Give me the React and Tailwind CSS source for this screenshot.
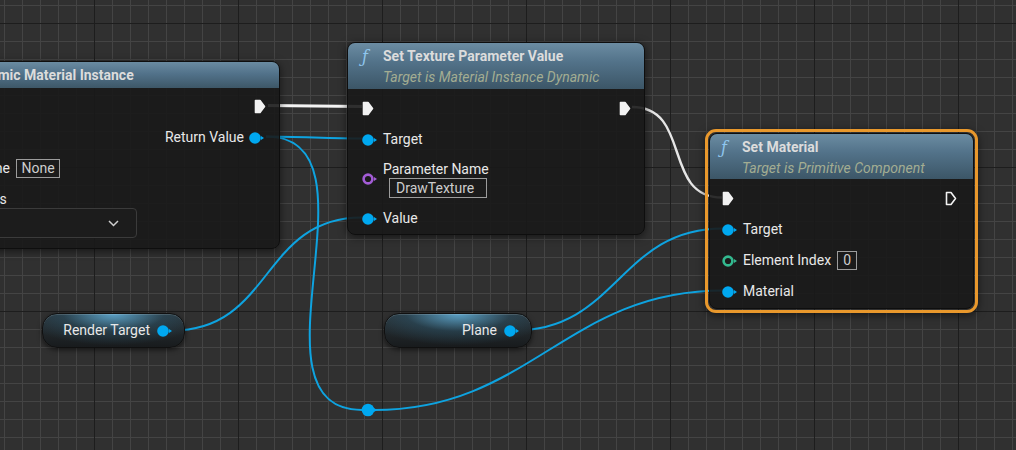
import React from 'react';

const FONT = "font-['Roboto','Liberation_Sans',sans-serif]";

const bez = (x1, y1, x2, y2) => {
  const t = (Math.abs(x2 - x1) + Math.abs(y2 - y1)) / 3;
  return `M${x1} ${y1} C${x1 + t} ${y1} ${x2 - t} ${y2} ${x2} ${y2}`;
};

const ExecPin = ({ filled = true }) => (
  <svg width="12" height="15" viewBox="0 0 12 15">
    <path
      d="M1.5 1.5 H6 L10.5 7.5 L6 13.5 H1.5 Z"
      fill={filled ? '#f2f2f2' : 'none'}
      stroke="#f2f2f2"
      strokeWidth="1.6"
      strokeLinejoin="round"
    />
  </svg>
);

const DataPin = ({ color = '#00a8f0' }) => (
  <svg width="16" height="12" viewBox="0 0 16 12">
    <circle cx="6" cy="6" r="5.8" fill={color} />
    <path d="M12 4 L15 6 L12 8 Z" fill={color} />
  </svg>
);

const RingPin = ({ color }) => (
  <svg width="16" height="12" viewBox="0 0 16 12">
    <circle cx="6" cy="6" r="4.4" fill="none" stroke={color} strokeWidth="2.6" />
    <path d="M12 4 L15 6 L12 8 Z" fill={color} />
  </svg>
);

const Header = ({ title, subtitle }) => (
  <div className="flex h-[46px] rounded-t-[7px] bg-[linear-gradient(180deg,#6b8ca2_0%,#53738a_40%,#3c5667_100%)] pl-[14px] pt-[4px]">
    <span className="w-[21px] font-['DejaVu_Serif',serif] text-[16px] italic leading-[19px] text-[#8fc6ee]">ƒ</span>
    <div>
      <div className="text-[14px] font-bold leading-[18px] text-[#dcdcdc]">{title}</div>
      <div className="mt-[3px] text-[14px] italic leading-[18px] text-[#a3ad92]">{subtitle}</div>
    </div>
  </div>
);

const Label = ({ children }) => <span className="text-[14px] text-[#e8e8e8]">{children}</span>;

const ValueBox = ({ children, className }) => (
  <div className={`flex items-center border border-[#9c9c9c] text-[14px] text-[#cdcdcd] ${className}`}>{children}</div>
);

const Pill = ({ label, className }) => (
  <div
    className={`absolute top-[313px] flex h-[35px] items-center justify-end gap-[7px] rounded-[15px] border border-[#101010] bg-[radial-gradient(ellipse_65%_95%_at_50%_0%,rgba(96,172,212,0.9),rgba(44,86,108,0.45)_55%,transparent_100%),linear-gradient(180deg,#2c353a,#181b1d)] pr-[11px] shadow-[inset_0_1px_0_rgba(255,255,255,0.14),0_2px_5px_rgba(0,0,0,0.55)] ${className}`}
  >
    <Label>{label}</Label>
    <DataPin />
  </div>
);

export default function App() {
  return (
    <div
      className={`relative h-[450px] w-[1016px] overflow-hidden bg-[#303030] bg-[linear-gradient(to_right,#1d1d1d_1px,transparent_1px),linear-gradient(to_bottom,#1d1d1d_1px,transparent_1px),linear-gradient(to_right,#444444_1px,transparent_1px),linear-gradient(to_bottom,#444444_1px,transparent_1px)] bg-size-[144px_144px,144px_144px,18px_18px,18px_18px] bg-position-[94px_23px,94px_23px,4px_5px,4px_5px] ${FONT}`}
    >
      {/* wires, drawn under the nodes */}
      <svg className="absolute inset-0" width="1016" height="450">
        <path d="M268 105.5 L362 106.5" stroke="#f4f4f4" strokeWidth="3" fill="none" />
        <path d={bez(632, 107, 722, 197.5)} stroke="#e6e6e6" strokeWidth="2.4" fill="none" />
        <g stroke="#0ea3e0" strokeWidth="2" fill="none">
          <path d={bez(266, 136.5, 362, 138.5)} />
          <path d={bez(266, 136.5, 362, 410)} />
          <path d={bez(374, 410, 723, 290.5)} />
          <path d={bez(172, 330.5, 362, 217.5)} />
          <path d={bez(514, 330.5, 723, 228.5)} />
        </g>
        <circle cx="368" cy="410" r="6.3" fill="#00a8f0" />
        <path d="M374 408 L377 410 L374 412 Z" fill="#00a8f0" />
      </svg>

      {/* Create Dynamic Material Instance (cut off on the left) */}
      <div className="absolute left-[-113px] top-[61px] w-[393px] rounded-[8px] border border-[#0e0e0e] bg-[rgba(25,26,25,0.9)] shadow-[0_2px_8px_rgba(0,0,0,0.55)]">
        <div className="flex h-[26px] items-center rounded-t-[7px] bg-[linear-gradient(180deg,#6a8ba1_0%,#52728a_45%,#3d5767_100%)] pl-[12px]">
          <span className="w-[21px] font-['DejaVu_Serif',serif] text-[16px] italic text-[#8fc6ee]">ƒ</span>
          <span className="text-[14px] font-bold text-[#dcdcdc]">Create Dynamic Material Instance</span>
        </div>
        <div className="flex flex-col pb-[10px] pt-[3px]">
          <div className="flex h-[31px] items-center justify-between pl-[14px] pr-[13px]">
            <ExecPin />
            <ExecPin />
          </div>
          <div className="flex h-[31px] items-center justify-between pl-[14px] pr-[14px]">
            <DataPin />
            <div className="flex items-center gap-[5px]">
              <Label>Return Value</Label>
              <DataPin />
            </div>
          </div>
          <div className="flex h-[31px] items-center gap-[5px] pl-[8px]">
            <RingPin color="#a35cd6" />
            <Label>Optional Name</Label>
            <ValueBox className="ml-[1px] h-[19px] w-[44px] justify-center">None</ValueBox>
          </div>
          <div className="mt-[6px] flex h-[18px] items-center pl-[29px]">
            <Label>Creation Flags</Label>
          </div>
          <div className="ml-[19px] flex h-[30px] w-[230px] items-center justify-end rounded-[4px] border border-[#3b3b3b] bg-[#1c1c1c] pr-[17px]">
            <svg width="11" height="7" viewBox="0 0 11 7">
              <path d="M1 1 L5.5 5.5 L10 1" stroke="#cfcfcf" strokeWidth="1.5" fill="none" />
            </svg>
          </div>
        </div>
      </div>

      {/* Set Texture Parameter Value */}
      <div className="absolute left-[347px] top-[42px] w-[298px] rounded-[8px] border border-[#0e0e0e] bg-[rgba(25,26,25,0.9)] shadow-[0_2px_8px_rgba(0,0,0,0.55)]">
        <Header title="Set Texture Parameter Value" subtitle="Target is Material Instance Dynamic" />
        <div className="flex flex-col pt-[4px]">
          <div className="flex h-[31px] items-center justify-between pl-[14px] pr-[13px]">
            <ExecPin />
            <ExecPin />
          </div>
          <div className="flex h-[31px] items-center gap-[5px] pl-[14px]">
            <DataPin />
            <Label>Target</Label>
          </div>
          <div className="flex h-[48px] items-center gap-[5px] pl-[14px]">
            <RingPin color="#a35cd6" />
            <div className="flex flex-col">
              <span className="text-[14px] leading-[18px] text-[#e8e8e8]">Parameter Name</span>
              <ValueBox className="ml-[6px] h-[20px] w-[98px] pl-[6px]">DrawTexture</ValueBox>
            </div>
          </div>
          <div className="flex h-[31px] items-center gap-[5px] pl-[14px]">
            <DataPin />
            <Label>Value</Label>
          </div>
        </div>
      </div>

      {/* Set Material (selected) */}
      <div className="absolute left-[705px] top-[129px] w-[273px] rounded-[11px] border-[3px] border-[#e9982c] p-[1px] shadow-[0_2px_8px_rgba(0,0,0,0.55)]">
        <div className="rounded-[8px] border border-[#0e0e0e] bg-[rgba(25,26,25,0.9)]">
          <div className="flex h-[45px] rounded-t-[7px] bg-[linear-gradient(180deg,#6b8ca2_0%,#53738a_40%,#3c5667_100%)] pl-[11px] pt-[4px]">
            <span className="w-[21px] font-['DejaVu_Serif',serif] text-[16px] italic leading-[19px] text-[#8fc6ee]">ƒ</span>
            <div>
              <div className="text-[14px] font-bold leading-[18px] text-[#dcdcdc]">Set Material</div>
              <div className="mt-[3px] text-[14px] italic leading-[18px] text-[#a3ad92]">Target is Primitive Component</div>
            </div>
          </div>
          <div className="flex flex-col pb-[1px] pt-[4px]">
            <div className="flex h-[31px] items-center justify-between pl-[12px] pr-[16px]">
              <ExecPin />
              <ExecPin filled={false} />
            </div>
            <div className="flex h-[31px] items-center gap-[5px] pl-[12px]">
              <DataPin />
              <Label>Target</Label>
            </div>
            <div className="flex h-[31px] items-center gap-[5px] pl-[12px]">
              <RingPin color="#33b98f" />
              <Label>Element Index</Label>
              <ValueBox className="ml-[1px] h-[19px] w-[20px] justify-center">0</ValueBox>
            </div>
            <div className="flex h-[31px] items-center gap-[5px] pl-[12px]">
              <DataPin />
              <Label>Material</Label>
            </div>
          </div>
        </div>
      </div>

      <Pill label="Render Target" className="left-[42px] w-[143px]" />
      <Pill label="Plane" className="left-[384px] w-[148px]" />
    </div>
  );
}
